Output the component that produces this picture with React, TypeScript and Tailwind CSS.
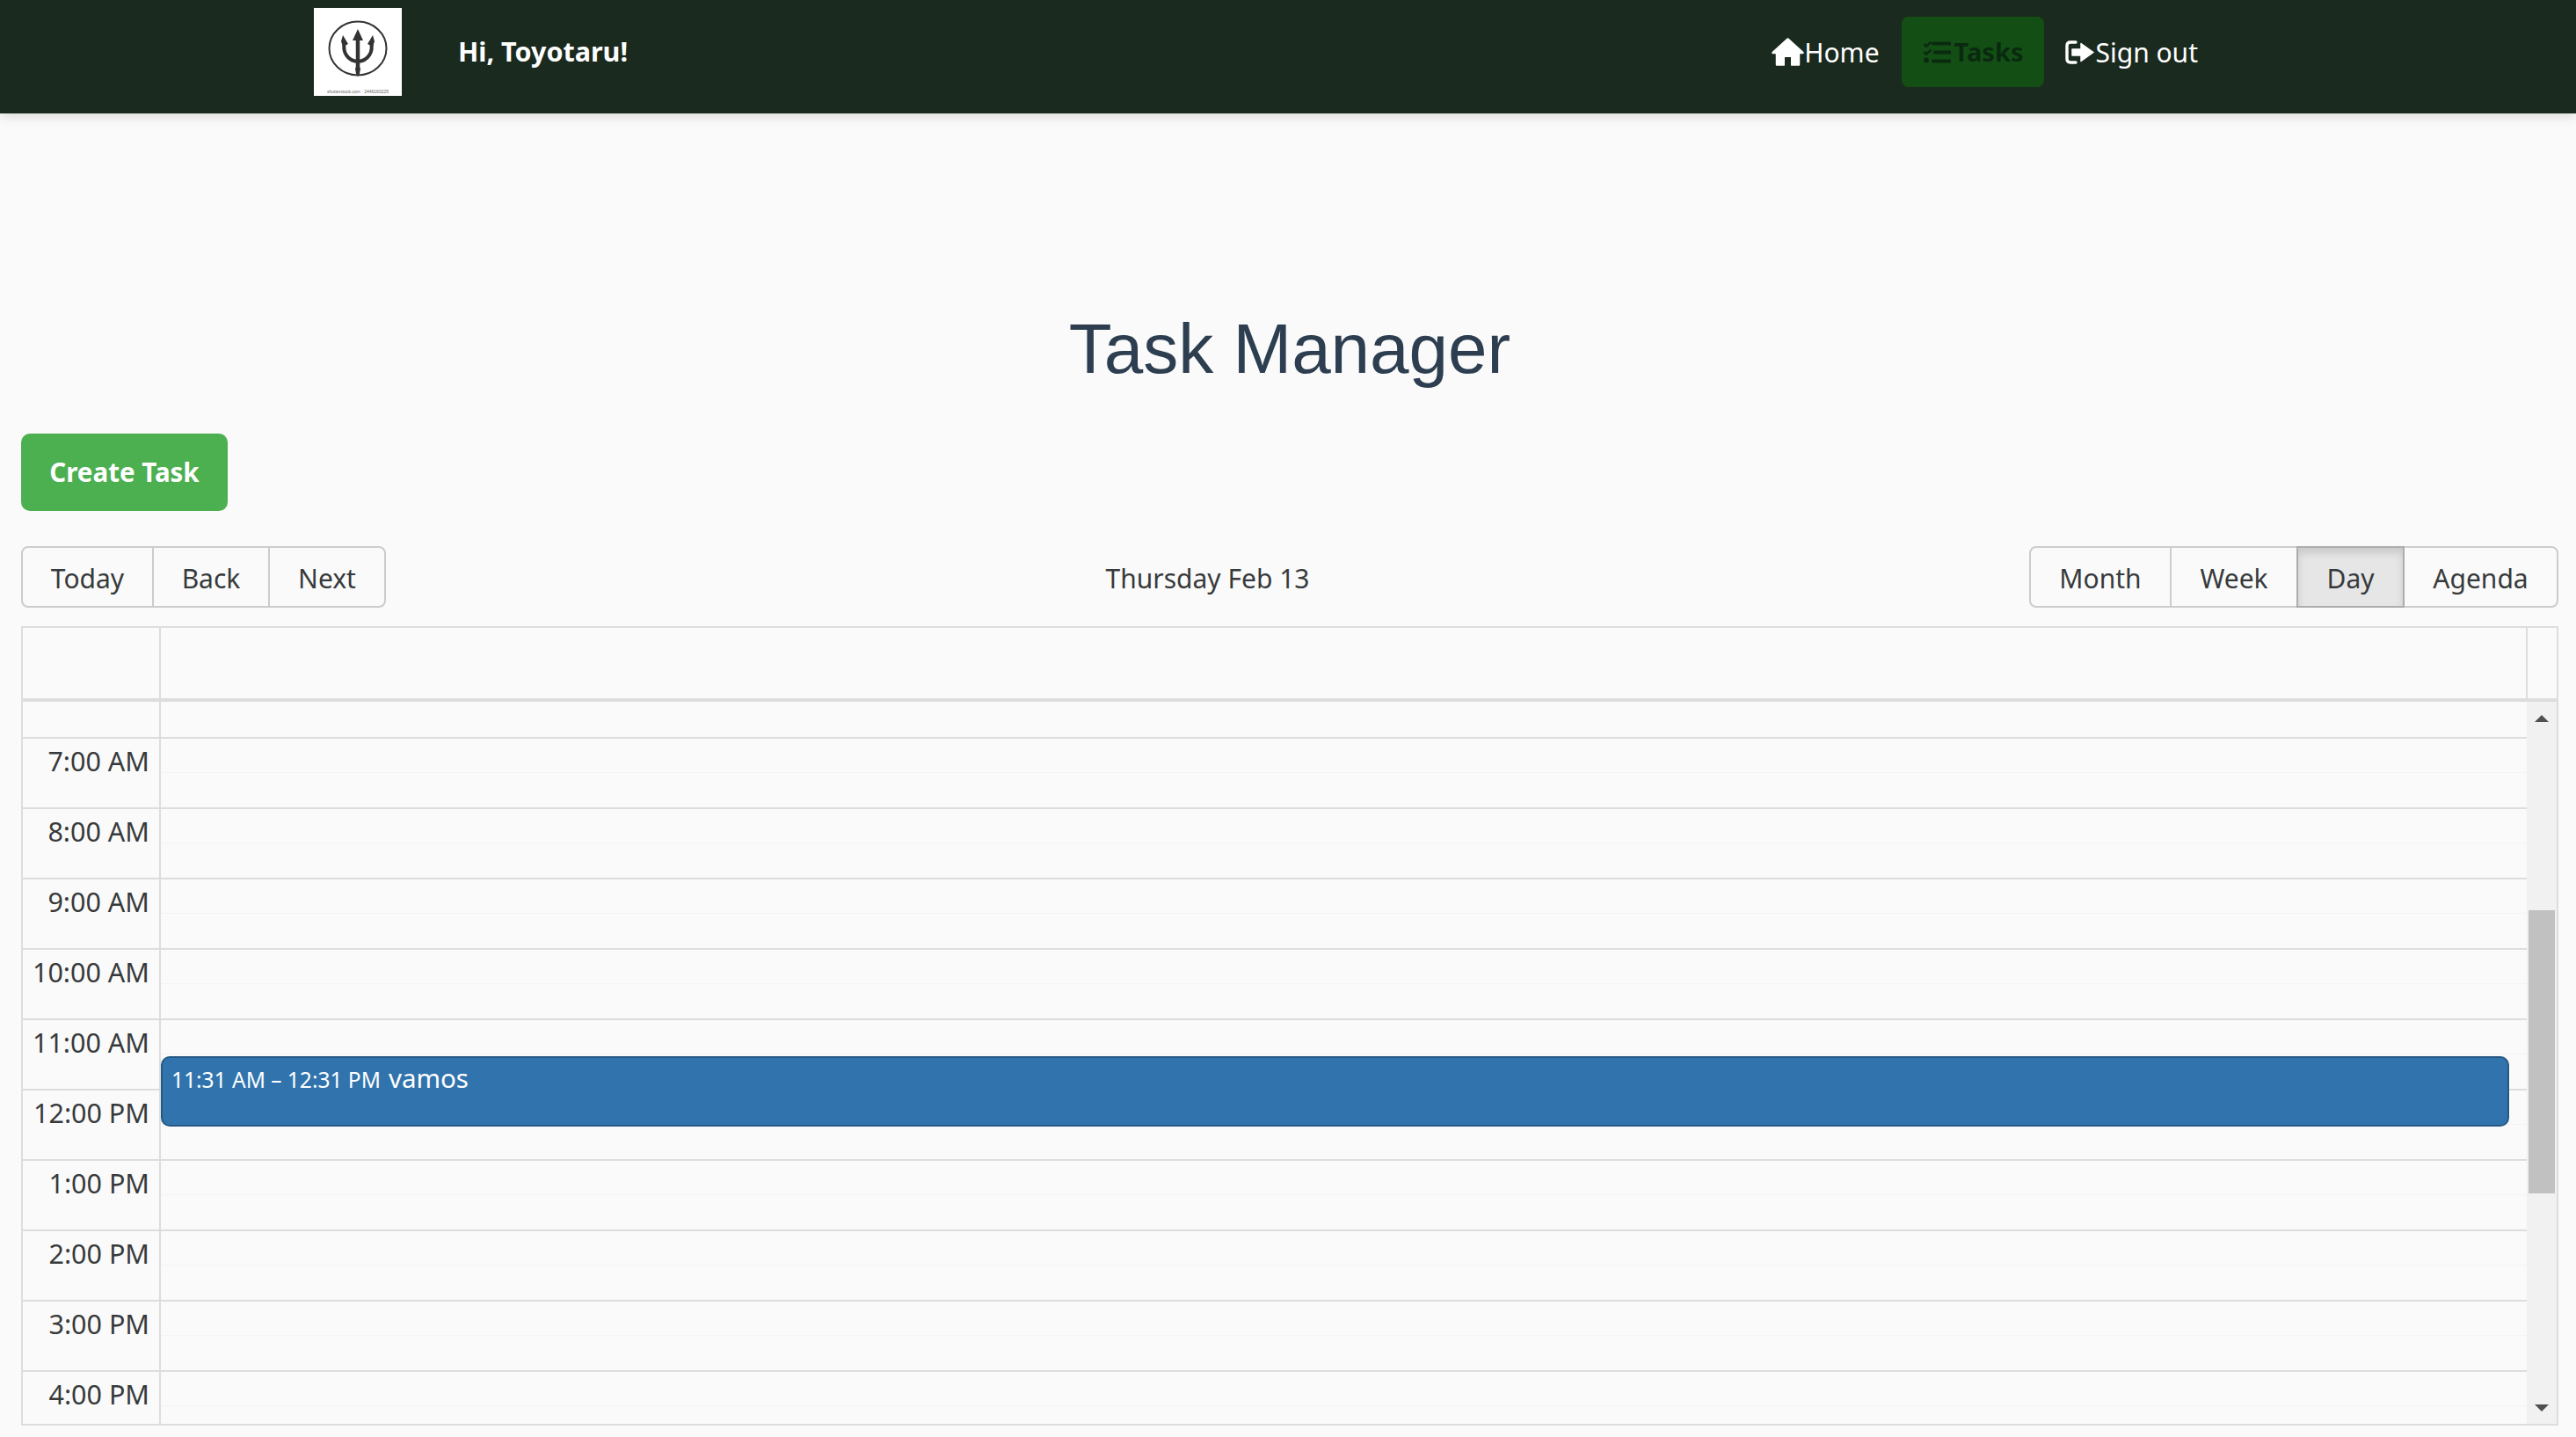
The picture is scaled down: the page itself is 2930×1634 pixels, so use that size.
const HOURS = ['7:00 AM', '8:00 AM', '9:00 AM', '10:00 AM', '11:00 AM', '12:00 PM', '1:00 PM', '2:00 PM', '3:00 PM', '4:00 PM'];

function Logo() {
  return (
    <svg viewBox="0 0 100 100" className="w-[100px] h-[100px] bg-white shrink-0">
      <ellipse cx="50" cy="46" rx="32.5" ry="30.5" fill="none" stroke="#333" strokeWidth="2" />
      <path d="M50 24 L56 37 L44 37 Z" fill="#333" />
      <path d="M50 34 V72" fill="none" stroke="#333" strokeWidth="4.5" />
      <path d="M47 68 H53 L52 75 L50 78 L48 75 Z" fill="#333" />
      <path d="M35 38 C32 50 38 60 50 61 C62 60 68 50 65 38" fill="none" stroke="#333" strokeWidth="4" />
      <path d="M33 31 L39 41 L33 44 L31 38 Z M67 31 L61 41 L67 44 L69 38 Z" fill="#333" />
      <text x="50" y="97" textAnchor="middle" fontSize="5" fill="#666" fontFamily="Liberation Sans, sans-serif">shutterstock.com · 2446160225</text>
    </svg>
  );
}

function HomeIcon() {
  return (
    <svg viewBox="0 0 37 32" className="w-[37px] h-[32px] shrink-0" fill="currentColor">
      <path
        d="M18.5 1.5 L35.5 17 H31 V30.5 H23 V21 H14 V30.5 H6 V17 H1.5 Z"
        stroke="currentColor"
        strokeWidth="2.5"
        strokeLinejoin="round"
      />
      <path d="M15 22 H22 V32 H15 Z" fill="#1a2a1e" />
    </svg>
  );
}

function TasksIcon() {
  return (
    <svg viewBox="0 0 32 25" className="w-[32px] h-[25px] shrink-0" fill="none" stroke="currentColor">
      <path d="M1.5 3 L4 5.5 L9.5 0.8" strokeWidth="2.6" />
      <path d="M1.5 12 L4 14.5 L9.5 9.8" strokeWidth="2.6" />
      <circle cx="4" cy="21.5" r="3" fill="currentColor" stroke="none" />
      <path d="M12 2.5 H32 M14 12.5 H32 M12 22.5 H32" strokeWidth="4" strokeLinecap="round" />
    </svg>
  );
}

function SignOutIcon() {
  return (
    <svg viewBox="0 0 33 27" className="w-[33px] h-[27px] shrink-0" fill="none">
      <path d="M12 2 H6 Q2 2 2 6 V21 Q2 25 6 25 H12" stroke="currentColor" strokeWidth="3.4" strokeLinecap="round" />
      <path d="M8 10 H18 V3.5 L32 13.5 L18 23.5 V17 H8 Z" fill="currentColor" stroke="currentColor" strokeWidth="1.5" strokeLinejoin="round" />
    </svg>
  );
}

function Header() {
  return (
    <header className="relative z-10 flex items-center h-[129px] pb-[11px] pl-[357px] pr-[406px] bg-[#1a2a1e] shadow-[0_4px_12px_rgba(0,0,0,0.12)]">
      <Logo />
      <span className="ml-[64px] text-[30.5px] font-bold text-white">Hi, Toyotaru!</span>
      <nav className="ml-auto flex items-center text-[30px]">
        <a className="flex items-center h-[80px] pl-[24px] pr-[25px] text-white">
          <HomeIcon />
          Home
        </a>
        <a className="flex items-center gap-[4px] h-[80px] px-[24px] rounded-[8px] bg-[#134f14] text-[29px] font-bold text-[#0a2a10]">
          <TasksIcon />
          Tasks
        </a>
        <a className="flex items-center gap-[1px] h-[80px] px-[24px] text-white">
          <SignOutIcon />
          Sign out
        </a>
      </nav>
    </header>
  );
}

function ToolbarGroup({ items, active }: { items: { label: string; width: string }[]; active?: string }) {
  return (
    <div className="flex h-[70px]">
      {items.map((item, i) => (
        <button
          key={item.label}
          className={`${item.width} border-2 pt-[2px] text-[30px] text-[#373a3c] ${i > 0 ? '-ml-[2px]' : 'rounded-l-[8px]'} ${i === items.length - 1 ? 'rounded-r-[8px]' : ''} ${
            item.label === active
              ? 'relative bg-[#e6e6e6] border-[#adadad] shadow-[inset_0_6px_10px_rgba(0,0,0,0.125)]'
              : 'border-[#cccccc]'
          }`}
        >
          {item.label}
        </button>
      ))}
    </div>
  );
}

function Calendar() {
  return (
    <div className="mt-[21px] border-2 border-[#dddddd]">
      {/* header row */}
      <div className="flex h-[84px] border-b-4 border-[#dddddd]">
        <div className="w-[157px] border-r-2 border-[#dddddd]" />
        <div className="flex-1 border-r-2 border-[#dddddd]" />
        <div className="w-[33px]" />
      </div>

      <div className="flex h-[821px] overflow-hidden">
        <div className="w-[157px] shrink-0 border-r-2 border-[#dddddd]">
          <div className="h-[42px] border-b-2 border-[#dddddd]" />
          {HOURS.map((hour) => (
            <div key={hour} className="h-[80px] border-b-2 border-[#dddddd] pr-[11px] pt-[3px] text-right text-[30.5px] leading-[44px] text-[#373a3c]">
              {hour}
            </div>
          ))}
        </div>

        <div className="relative flex-1">
          <div className="h-[42px] border-b-2 border-[#dddddd]" />
          {HOURS.map((hour) => (
            <div key={hour} className="h-[80px] border-b-2 border-[#dddddd]">
              <div className="h-[39px] border-b border-[#f4f4f4]" />
            </div>
          ))}
          <div className="absolute left-0 right-[20px] top-[403px] h-[80px] rounded-[10px] border-2 border-[#265985] bg-[#3174ad] pl-[10px] pt-[5px] text-white">
            <span className="text-[24.5px] leading-[36px]">11:31 AM – 12:31 PM</span>
            <span className="ml-[9px] text-[29.5px] leading-[36px]">vamos</span>
          </div>
        </div>

        {/* scrollbar */}
        <div className="relative w-[34px] shrink-0 bg-[#f1f1f1] px-[2px] pt-[237px]">
          <svg viewBox="0 0 16 8" className="absolute left-[9px] top-[15px] w-[16px] h-[8px]">
            <path d="M8 0 L16 8 L0 8 Z" fill="#505050" />
          </svg>
          <div className="h-[322px] bg-[#c1c1c1]" />
          <svg viewBox="0 0 16 8" className="absolute left-[9px] bottom-[14px] w-[16px] h-[8px]">
            <path d="M0 0 L16 0 L8 8 Z" fill="#505050" />
          </svg>
        </div>
      </div>
    </div>
  );
}

export default function App() {
  return (
    <div className="h-[1634px] overflow-hidden bg-[#fafafa] font-['Noto_Sans',sans-serif]">
      <Header />
      <main className="pr-[20px] pl-[24px]">
        <h1 className="pt-[222px] text-center text-[80px] leading-[92px] text-[#2c3e50] font-['Liberation_Sans',sans-serif]">
          Task Manager
        </h1>
        <button className="mt-[50px] block h-[88px] w-[235px] rounded-[10px] bg-[#4caf50] text-[29.5px] font-bold text-white">
          Create Task
        </button>
        <div className="mt-[40px] flex items-center">
          <ToolbarGroup
            items={[
              { label: 'Today', width: 'w-[151px]' },
              { label: 'Back', width: 'w-[134px]' },
              { label: 'Next', width: 'w-[134px]' },
            ]}
          />
          <span className="flex-1 pt-[2px] text-center text-[30px] text-[#373a3c]">Thursday Feb 13</span>
          <ToolbarGroup
            active="Day"
            items={[
              { label: 'Month', width: 'w-[162px]' },
              { label: 'Week', width: 'w-[146px]' },
              { label: 'Day', width: 'w-[123px]' },
              { label: 'Agenda', width: 'w-[177px]' },
            ]}
          />
        </div>
        <Calendar />
      </main>
    </div>
  );
}
